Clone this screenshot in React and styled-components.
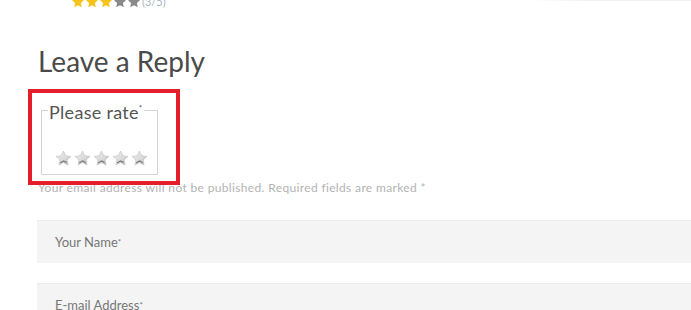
import React from 'react';
import styled, { createGlobalStyle } from 'styled-components';

const GlobalStyle = createGlobalStyle`
  html, body {
    margin: 0;
    padding: 0;
    background: #fff;
    overflow: hidden;
  }
  body {
    font-family: Lato, "Open Sans", "Liberation Sans", sans-serif;
  }
`;

const Page = styled.div`
  position: relative;
  width: 691px;
  height: 310px;
  padding-left: 37px;
  box-sizing: border-box;
  overflow: hidden;
`;

const TopRule = styled.div`
  position: absolute;
  top: 0;
  right: 0;
  width: 160px;
  height: 1px;
  background: linear-gradient(to right, rgba(238, 238, 238, 0), #efefef 40%);
`;

const TopRating = styled.div`
  display: flex;
  align-items: center;
  height: 13px;
  margin-top: -5px;
  margin-left: 34px;
`;

const RatingCount = styled.span`
  font-size: 11px;
  color: #a9b4c0;
  margin-left: 1px;
  line-height: 13px;
`;

const Heading = styled.h2`
  margin: 36px 0 0 1px;
  font-size: 28px;
  line-height: 34px;
  font-weight: 400;
  color: #4a4a4a;
  letter-spacing: 0;
`;

const RateWrap = styled.div`
  position: relative;
  margin: 20px 0 0 4px;
`;

const RateSet = styled.fieldset`
  margin: 0;
  width: 117px;
  height: 77px;
  box-sizing: border-box;
  padding: 0 6px;
  border: 1px solid #d4d4d4;
`;

const Legend = styled.legend`
  padding: 0 1px;
  font-size: 18px;
  line-height: 21px;
  letter-spacing: 0.3px;
  color: #555;
`;

const Req = styled.sup`
  font-size: 8px;
  vertical-align: 8px;
`;

const StarRow = styled.div`
  display: flex;
  gap: 2px;
  margin: 27px 0 0 7px;
`;

const Highlight = styled.div`
  position: absolute;
  left: -13px;
  top: -9px;
  width: 152px;
  height: 96px;
  box-sizing: border-box;
  border: 4px solid #e41e2b;
  pointer-events: none;
`;

const Note = styled.p`
  margin: 5px 0 0 1px;
  font-size: 12px;
  line-height: 16px;
  letter-spacing: 0.35px;
  color: #b3b3b3;
  white-space: nowrap;
`;

const Field = styled.div`
  width: 700px;
  height: 43px;
  margin-top: ${(p) => p.$gap}px;
  box-sizing: border-box;
  background: #f4f4f4;
  border-top: 1px solid #ececec;
  display: flex;
  align-items: center;
  padding-left: 18px;
  font-size: 13px;
  color: #777;
`;

const StarPath =
  'M10 1.2l2.7 5.6 6.1.8-4.5 4.2 1.1 6.1L10 15l-5.4 2.9 1.1-6.1L1.2 7.6l6.1-.8z';

function SmallStar({ color }) {
  return (
    <svg width="14" height="13" viewBox="0 0 20 19">
      <path d={StarPath} fill={color} />
    </svg>
  );
}

function EmptyStar({ id }) {
  return (
    <svg width="17" height="16" viewBox="0 0 20 19">
      <defs>
        <linearGradient id={`g${id}`} x1="0" y1="0" x2="1" y2="1">
          <stop offset="0" stopColor="#f0f0f0" />
          <stop offset="0.6" stopColor="#d8d8d8" />
          <stop offset="1" stopColor="#a0a0a0" />
        </linearGradient>
      </defs>
      <path d={StarPath} fill={`url(#g${id})`} stroke="#c4c4c4" strokeWidth="0.8" strokeLinejoin="round" />
      <path d="M6 15.5l4-2.6 3.6 2" fill="none" stroke="#777" strokeWidth="1.4" />
    </svg>
  );
}

export default function App() {
  return (
    <>
      <GlobalStyle />
      <Page>
        <TopRule />
        <TopRating>
          {['#f6c31c', '#f6c31c', '#f6c31c', '#8a8a8a', '#8a8a8a'].map((c, i) => (
            <SmallStar key={i} color={c} />
          ))}
          <RatingCount>(3/5)</RatingCount>
        </TopRating>
        <Heading>Leave a Reply</Heading>
        <RateWrap>
          <RateSet>
            <Legend>
              Please rate<Req>*</Req>
            </Legend>
            <StarRow>
              {[1, 2, 3, 4, 5].map((n) => (
                <EmptyStar key={n} id={n} />
              ))}
            </StarRow>
          </RateSet>
          <Highlight />
        </RateWrap>
        <Note>Your email address will not be published. Required fields are marked *</Note>
        <Field $gap={24}>
          Your Name<Req>*</Req>
        </Field>
        <Field $gap={20}>
          E-mail Address<Req>*</Req>
        </Field>
      </Page>
    </>
  );
}
